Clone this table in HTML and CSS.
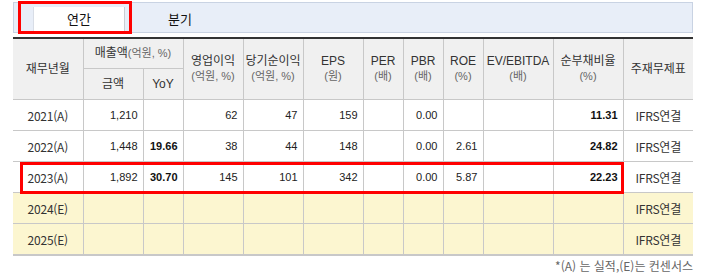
FILE: index.html
```html
<!DOCTYPE html>
<html lang="ko">
<head>
<meta charset="utf-8">
<link rel="stylesheet" href="styles.css">
</head>
<body>
<div class="wrap">
  <div class="tabbar">
    <div class="tab active">연간</div>
    <div class="tab">분기</div>
  </div>
  <div class="hl hl-tab"></div>
  <table class="fin">
    <colgroup>
      <col class="w70"><col class="w60"><col class="w40"><col class="w60"><col class="w60"><col class="w60">
      <col class="w40"><col class="w40"><col class="w40"><col class="w70"><col class="w70"><col class="w70">
    </colgroup>
    <thead>
      <tr>
        <th rowspan="2">재무년월</th>
        <th colspan="2" class="top">매출액<span class="unit">(억원, %)</span></th>
        <th rowspan="2"><span class="ln">영업이익</span><span class="ln unit">(억원, %)</span></th>
        <th rowspan="2"><span class="ln">당기순이익</span><span class="ln unit">(억원, %)</span></th>
        <th rowspan="2"><span class="ln">EPS</span><span class="ln unit">(원)</span></th>
        <th rowspan="2"><span class="ln">PER</span><span class="ln unit">(배)</span></th>
        <th rowspan="2"><span class="ln">PBR</span><span class="ln unit">(배)</span></th>
        <th rowspan="2"><span class="ln">ROE</span><span class="ln unit">(%)</span></th>
        <th rowspan="2"><span class="ln">EV/EBITDA</span><span class="ln unit">(배)</span></th>
        <th rowspan="2"><span class="ln">순부채비율</span><span class="ln unit">(%)</span></th>
        <th rowspan="2">주재무제표</th>
      </tr>
      <tr>
        <th class="sub">금액</th>
        <th class="sub">YoY</th>
      </tr>
    </thead>
    <tbody>
      <tr>
        <td class="c">2021(A)</td><td>1,210</td><td class="b"></td><td>62</td><td>47</td><td>159</td>
        <td></td><td>0.00</td><td></td><td></td><td class="b">11.31</td><td class="c">IFRS연결</td>
      </tr>
      <tr>
        <td class="c">2022(A)</td><td>1,448</td><td class="b">19.66</td><td>38</td><td>44</td><td>148</td>
        <td></td><td>0.00</td><td>2.61</td><td></td><td class="b">24.82</td><td class="c">IFRS연결</td>
      </tr>
      <tr>
        <td class="c">2023(A)</td><td>1,892</td><td class="b">30.70</td><td>145</td><td>101</td><td>342</td>
        <td></td><td>0.00</td><td>5.87</td><td></td><td class="b">22.23</td><td class="c">IFRS연결</td>
      </tr>
      <tr class="est">
        <td class="c">2024(E)</td><td></td><td></td><td></td><td></td><td></td>
        <td></td><td></td><td></td><td></td><td></td><td class="c">IFRS연결</td>
      </tr>
      <tr class="est">
        <td class="c">2025(E)</td><td></td><td></td><td></td><td></td><td></td>
        <td></td><td></td><td></td><td></td><td></td><td class="c">IFRS연결</td>
      </tr>
    </tbody>
  </table>
  <div class="hl hl-row"></div>
  <p class="note">*(A) 는 실적,(E)는 컨센서스</p>
</div>
</body>
</html>
```
FILE: styles.css
```css
html, body {
  margin: 0;
  padding: 0;
  background: #fff;
}
body {
  font-family: "Noto Sans CJK KR", "Noto Sans", sans-serif;
  color: #333;
}
.wrap {
  position: relative;
  width: 680px;
  padding: 2px 9px 0 13px;
}
.tabbar {
  height: 29px;
  border: 1px solid #c9d3e3;
  background: #e8eef8;
  display: flex;
  align-items: flex-end;
  gap: 9px;
  padding-left: 19px;
}
.tab {
  width: 92px;
  height: 25px;
  line-height: 23px;
  text-align: center;
  font-size: 13px;
  color: #111;
  box-sizing: border-box;
}
.tab.active {
  background: #fff;
  border-left: 1px solid #d8dde6;
  border-right: 1px solid #c9ccd2;
}
.hl {
  position: absolute;
  border: 3px solid #f00;
  box-sizing: border-box;
  pointer-events: none;
}
.hl-tab {
  left: 18px;
  top: 1px;
  width: 114px;
  height: 33px;
}
.hl-row {
  left: 20px;
  top: 162px;
  width: 604px;
  height: 32px;
}
.fin {
  margin-top: 4px;
  width: 680px;
  border-collapse: collapse;
  table-layout: fixed;
  border-top: 2px solid #333;
  border-bottom: 2px solid #c8c8c8;
  font-size: 12px;
}
.w70 { width: 70px; }
.w60 { width: 60px; }
.w40 { width: 40px; }
.fin th {
  background: #f0f0f0;
  font-family: "Liberation Sans", "Noto Sans CJK KR", sans-serif;
  font-weight: normal;
  color: #333;
  font-size: 12px;
  line-height: 15px;
  border: 1px solid #c8c8c8;
  border-top: none;
  padding: 0;
  height: 30px;
  white-space: nowrap;
}
.fin th .ln {
  display: block;
  height: 15px;
  line-height: 15px;
}
.fin th:first-child { border-left: none; }
.fin th:last-child { border-right: none; }
.fin th.top { height: 29px; }
.fin th.sub { height: 30px; }
.unit {
  color: #666;
  font-size: 11px;
}
.fin td {
  border: 1px solid #c8c8c8;
  height: 30px;
  padding: 0 5px 0 0;
  text-align: right;
  font-family: "Liberation Sans", Arial, sans-serif;
  font-size: 11px;
  color: #222;
  white-space: nowrap;
}
.fin td:first-child { border-left: none; }
.fin td:last-child { border-right: none; }
.fin td.c {
  text-align: center;
  padding: 0;
  font-family: "Noto Sans CJK KR", "Noto Sans", sans-serif;
  font-size: 12px;
  letter-spacing: -0.2px;
  color: #333;
}
.fin td.b { font-weight: bold; color: #111; }
.fin tr.est td { background: #fcf6d0; }
.note {
  margin: 3px 0 0;
  text-align: right;
  font-size: 12px;
  color: #666;
  line-height: 14px;
}
```
